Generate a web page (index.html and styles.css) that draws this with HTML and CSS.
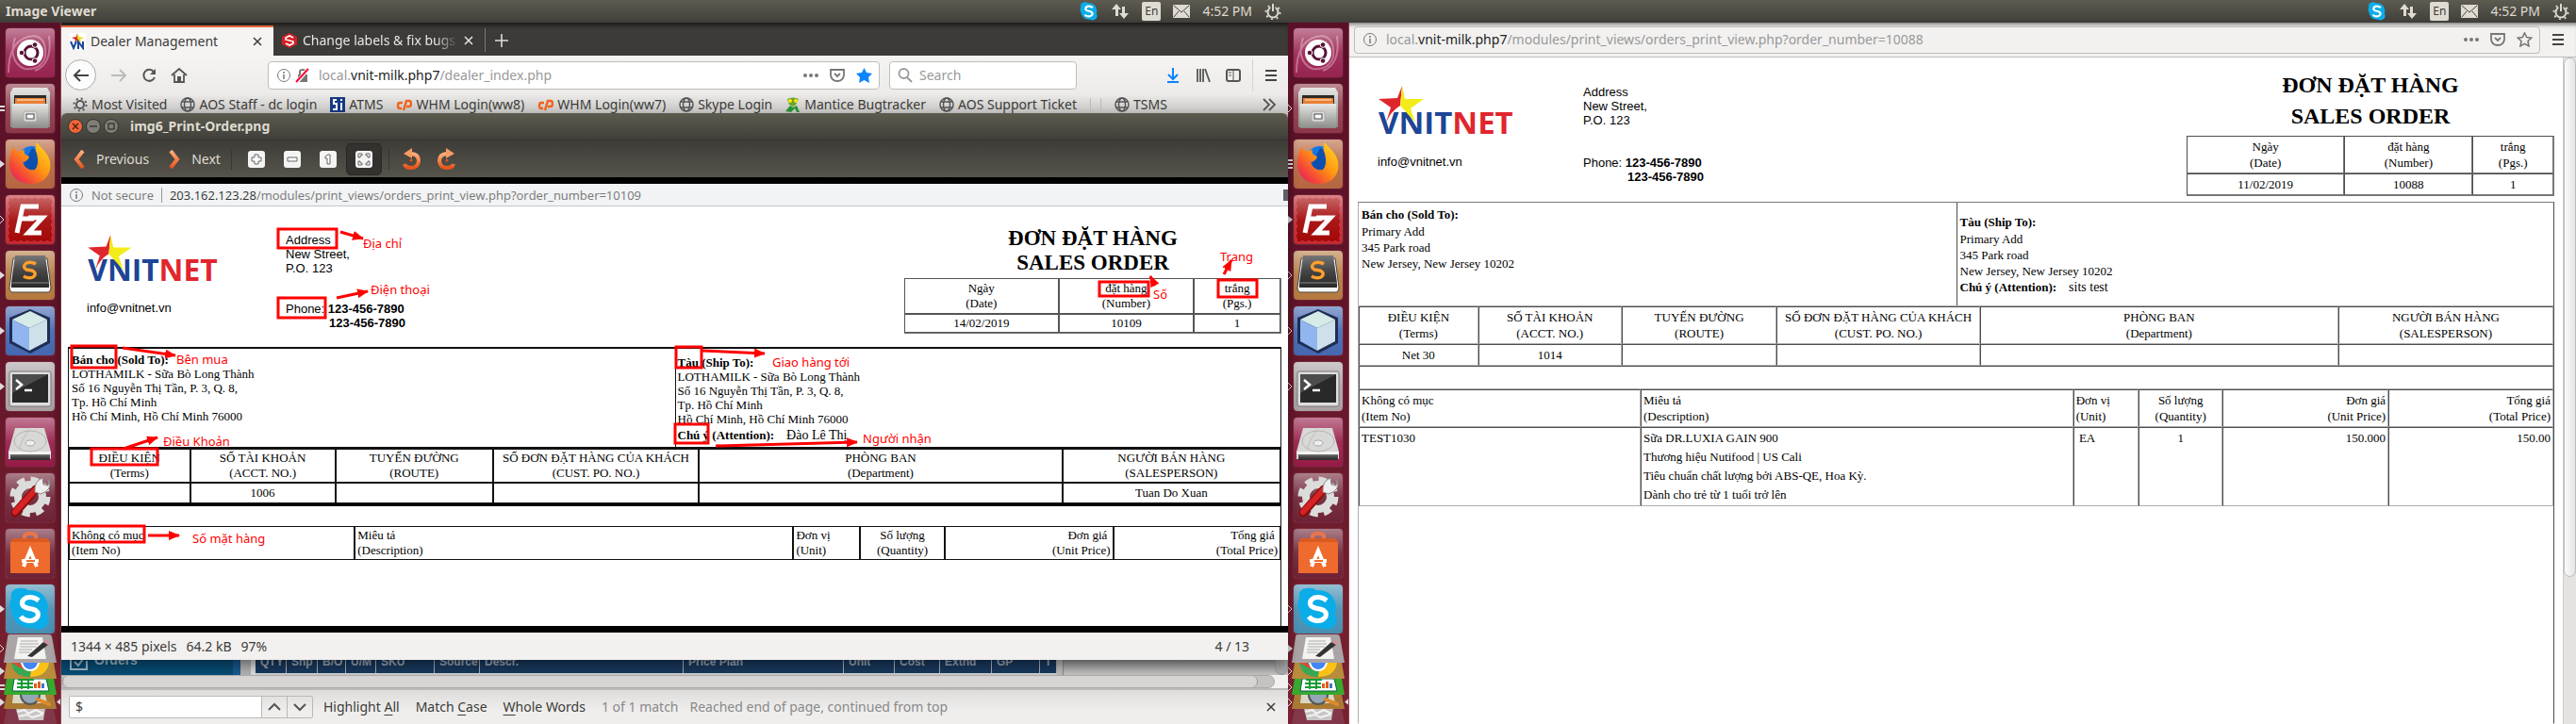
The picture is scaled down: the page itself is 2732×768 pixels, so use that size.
FILE: index.html
```html
<!DOCTYPE html>
<html lang="vi">
<head>
<meta charset="utf-8">
<title>Image Viewer</title>
<link rel="stylesheet" href="styles.css">
</head>
<body>
<svg class="defs" aria-hidden="true">
  <defs>
    <linearGradient id="gloss" x1="0" y1="0" x2="0" y2="1"><stop offset="0" stop-color="#fff" stop-opacity=".42"/><stop offset=".5" stop-color="#fff" stop-opacity=".08"/><stop offset="1" stop-color="#fff" stop-opacity="0"/></linearGradient>
    <linearGradient id="metal" x1="0" y1="0" x2="0" y2="1"><stop offset="0" stop-color="#e6e6e4"/><stop offset="1" stop-color="#8b8b88"/></linearGradient>
    <linearGradient id="dark" x1="0" y1="0" x2="0" y2="1"><stop offset="0" stop-color="#777"/><stop offset=".5" stop-color="#444"/><stop offset="1" stop-color="#292929"/></linearGradient>
    <linearGradient id="fox" x1="1" y1="0" x2="0" y2="1"><stop offset="0" stop-color="#ffe226"/><stop offset=".45" stop-color="#ff9312"/><stop offset=".75" stop-color="#f4433a"/><stop offset="1" stop-color="#e0117a"/></linearGradient>
    <linearGradient id="orange" x1="0" y1="0" x2="0" y2="1"><stop offset="0" stop-color="#ffb07c"/><stop offset="1" stop-color="#ea5419"/></linearGradient>
    <marker id="head" markerUnits="userSpaceOnUse" markerWidth="13" markerHeight="10" refX="11" refY="5" orient="auto"><path d="M0 0 12 5 0 10z" fill="#f00"/></marker>
  </defs>
  <symbol id="t-ubuntu" viewBox="0 0 52 52"><rect width="52" height="52" rx="4" fill="#972350"/><path d="M3 47Q3 10 30 8q14 2 12 22-5 15-22 13Q2 35 10 10M46 8q4 30-15 37" fill="none" stroke="#d58caa" stroke-width="2" opacity=".65"/><rect width="52" height="52" rx="4" fill="url(#gloss)"/><circle cx="26" cy="26" r="14" fill="#fff"/><circle cx="27" cy="26" r="7" fill="none" stroke="#5a1337" stroke-width="3"/><g fill="#5a1337" stroke="#fff" stroke-width="1"><circle cx="17" cy="26" r="2.8"/><circle cx="31" cy="17.500" r="2.800"/><circle cx="31" cy="34.500" r="2.800"/></g></symbol>
  <symbol id="t-files" viewBox="0 0 52 52"><rect width="52" height="52" rx="4" fill="#8d3849"/><rect width="52" height="52" rx="4" fill="url(#gloss)"/><path d="M8 4h36l3 5v37H5V9z" fill="url(#metal)"/><path d="M9 12h34v9H9z" fill="#2d2a26"/><path d="M10 15h32v6H10z" fill="#e88035"/><path d="M12 17h28" stroke="#fff0d5"/><path d="M7 21h38v26H7z" fill="url(#metal)"/><rect x="19" y="29" width="14" height="11" rx="2" fill="#ddd" stroke="#aaa"/><rect x="22" y="32" width="8" height="5" fill="#fff" stroke="#444"/></symbol>
  <symbol id="t-firefox" viewBox="0 0 52 52"><rect width="52" height="52" rx="4" fill="#b5663f"/><rect width="52" height="52" rx="4" fill="url(#gloss)"/><circle cx="28" cy="22" r="15" fill="#1676e4"/><path d="M28 9q14 5 10 22l-11 5-9-8z" fill="#0c4fae"/><path d="M33 3q3 4 8 9 8 9 6 20-4 15-21 15Q7 46 4 28 4 14 9 8q1 3 4 5l7-2q-2 5 5 7-1 5-7 6 4 10 13 8 5-5 2-17-3-6 0-12z" fill="url(#fox)"/></symbol>
  <symbol id="t-fz" viewBox="0 0 52 52"><rect width="52" height="52" rx="4" fill="#c32a31"/><rect x="3" y="3" width="46" height="46" rx="2" fill="#a30505" stroke="#c32a31" stroke-width="2" stroke-dasharray="3 4"/><rect width="52" height="52" rx="4" fill="url(#gloss)"/><path d="M12 40 18 12h17M15 25h15M24 24h15L24 40h14" fill="none" stroke="#fff" stroke-width="5"/></symbol>
  <symbol id="t-sublime" viewBox="0 0 52 52"><rect width="52" height="52" rx="4" fill="#b5793f"/><rect width="52" height="52" rx="4" fill="url(#gloss)"/><path d="M8 8h36l4 31q0 5-4 5H8q-4 0-4-5z" fill="#f6f6f4" stroke="#444"/><path d="M10 5h32l4 29v5H6v-5z" fill="url(#dark)"/><path d="M6 34h40" stroke="#888"/><path d="M32 14q-5-3-10-1-5 4 0 7l6 1q6 3 1 7-5 2-10-1" fill="none" stroke="#ff9e2c" stroke-width="3.500"/></symbol>
  <symbol id="t-cube" viewBox="0 0 52 52"><rect width="52" height="52" rx="4" fill="#4467b0"/><rect width="52" height="52" rx="4" fill="url(#gloss)"/><path d="M26 3 47 12v27L26 50 4 39V12z" fill="#1f2d55"/><path d="M26 5 44 14 25 23 7 14z" fill="#d6ebe8"/><path d="M7 14l18 9v24L7 37z" fill="#91b5ee"/><path d="M44 14 25 23v24l19-10z" fill="#cfe0ea"/></symbol>
  <symbol id="t-term" viewBox="0 0 52 52"><rect width="52" height="52" rx="4" fill="#aaa1a5"/><rect width="52" height="52" rx="4" fill="url(#gloss)"/><rect x="4" y="10" width="44" height="37" rx="2" fill="#ddd" stroke="#777"/><rect x="7" y="13" width="38" height="30" fill="#292929"/><path d="M7 13h38L7 33z" fill="#4c4c4c"/><path d="M11 19l6 5-6 5M20 30h8" fill="none" stroke="#fff" stroke-width="2.500"/></symbol>
  <symbol id="t-disk" viewBox="0 0 52 52"><rect width="52" height="52" rx="4" fill="#961b47"/><rect width="52" height="52" rx="4" fill="url(#gloss)"/><path d="M10 11h31l7 25v8H3v-8z" fill="#d8d8d6"/><path d="M3 36h45v3H3z" fill="#f4f4f2"/><path d="M5 39h42v6H5z" fill="url(#dark)"/><ellipse cx="26" cy="25" rx="17" ry="11" fill="none" stroke="#b5b5b2"/><ellipse cx="26" cy="27" rx="5" ry="3" fill="#eee" stroke="#aaa"/><path d="M25 13q-8 10-11 20" fill="none" stroke="#bbb"/></symbol>
  <symbol id="t-settings" viewBox="0 0 52 52"><rect width="52" height="52" rx="4" fill="#6e2236"/><rect width="52" height="52" rx="4" fill="url(#gloss)"/><circle cx="26" cy="25" r="13" fill="none" stroke="#dcdcda" stroke-width="8"/><circle cx="26" cy="25" r="18" fill="none" stroke="#dcdcda" stroke-width="7" stroke-dasharray="8 6.140"/><path d="M10 42 32 17" stroke="#8a0e0e" stroke-width="9" stroke-linecap="round"/><path d="M10 41 31 18" stroke="#d62323" stroke-width="6" stroke-linecap="round"/><path d="M31 20q-1-12 8-15l1 7 5 1 1-6q4 11-9 15z" fill="#eee" stroke="#888"/></symbol>
  <symbol id="t-store" viewBox="0 0 52 52"><rect width="52" height="52" rx="4" fill="#6e2236"/><rect width="52" height="52" rx="4" fill="url(#gloss)"/><path d="M20 16V8q0-3 6-3t6 3v8" fill="none" stroke="#e8764a" stroke-width="4"/><path d="M5 14h42v33H5z" fill="#ef6a2d"/><path d="M5 14h42l-3-4H8z" fill="#d95b22"/><path d="M19 40l7-17 7 17M17 34h18" fill="none" stroke="#fff" stroke-width="4"/><path d="M22 34h9" stroke="#ef6a2d" stroke-width="2"/></symbol>
  <symbol id="skype" viewBox="0 0 46 46"><path d="M3 12Q1 3 10 1q7-1 11 2 17-1 21 16 0 6-1 9 4 8-1 13-6 6-15 2Q6 44 3 25 0 18 3 12z" fill="#0bade9"/><path d="M32 14q-6-5-13-3-6 3-4 8 2 3 10 4 8 2 6 8-4 6-12 4-4-1-6-4" fill="none" stroke="#fff" stroke-width="5"/></symbol>
  <symbol id="t-skype" viewBox="0 0 52 52"><rect width="52" height="52" rx="4" fill="#478fb3"/><rect width="52" height="52" rx="4" fill="url(#gloss)"/><use href="#skype" x="3" y="3" width="46" height="46"/></symbol>
  <symbol id="f-editor" viewBox="0 0 56 30"><path d="M6 0h42q2 0 3 2l5 28H0L4 3q0-3 2-3z" fill="#aaa4a6"/><path d="M15 3h26l4 23H11z" fill="#f3f3f0"/><path d="M18 7h18M17 10h20M17 13h18M16 16h14M16 19h12" stroke="#aaa"/><path d="M25 23 42 8l5 3-17 13z" fill="#333"/><path d="M42 8l3-2 5 3-3 2z" fill="#d58c9b"/></symbol>
  <symbol id="f-chrome" viewBox="0 0 56 17"><path d="M3 0h50l3 17H0z" fill="#b98c3c"/><path d="M8 0h40q-2 15-20 15T8 0z" fill="#38a853"/><path d="M28 15Q46 15 48 0H30z" fill="#fbc116"/><path d="M8 0h8l7 8z" fill="#e94335"/><path d="M18 0h20q-2 9-10 9T18 0z" fill="#fff"/><path d="M20 0h16q-2 7-8 7t-8-7z" fill="#4285f4"/></symbol>
  <symbol id="f-calc" viewBox="0 0 56 17"><path d="M3 0h50l3 17H0z" fill="#38a92f"/><path d="M11 0h34l3 13H9z" fill="#fff" stroke="#064"/><path d="M15 1h17M14 5h17M14 9h17M19 0v11M26 0v11" stroke="#179b35" stroke-width="2"/><path d="M32 10V5h3v5zM36 10V3h3v7z" fill="#e55c1c"/><path d="M40 10V5h3v5z" fill="#3778c9"/></symbol>
  <symbol id="f-viewer" viewBox="0 0 56 15"><path d="M3 0h50l3 15H0z" fill="#aa7a35"/><path d="M10 0h34l2 9H9z" fill="#d9d8c4"/><circle cx="28" cy="0" r="10" fill="#94a6b5" stroke="#555" stroke-width="2"/><path d="M36 5l12 5" stroke="#dd8b2b" stroke-width="4" stroke-linecap="round"/></symbol>
  <symbol id="f-trash" viewBox="0 0 56 16"><path d="M3 0h50l3 16H0z" fill="#82374a"/><path d="M13 0h31l-2 12H16z" fill="#c9c5c4"/><path d="M14 3l8-2 4 4 8-4 8 4M16 8l9-2 5 3 11-3" stroke="#f3f3f3" fill="none" stroke-width="2"/></symbol>
  <symbol id="p-fill" viewBox="0 0 6 10"><path d="M0 1l5 4-5 4z" fill="#ddd"/></symbol>
  <symbol id="p-line" viewBox="0 0 6 10"><path d="M0 1l4 4-4 4" fill="none" stroke="#ddd"/></symbol>
  <symbol id="p-two" viewBox="0 0 6 10"><path d="M0 3h5M0 7h5" stroke="#ddd" stroke-width="2"/></symbol>
  <symbol id="p-three" viewBox="0 0 6 10"><path d="M0 1h5M0 5h5M0 9h5" stroke="#ddd" stroke-width="2"/></symbol>
  <symbol id="updown" viewBox="0 0 20 18"><path d="M6 1 1 7h4v7h3V7h3zM14 17l5-6h-4V4h-3v7H9z" fill="#dfdbd2"/></symbol>
  <symbol id="mail" viewBox="0 0 18 14"><rect width="18" height="14" rx="1" fill="#dfdbd2"/><path d="M1 1l8 7 8-7M1 13l5-6M17 13l-5-6" fill="none" stroke="#45443f"/></symbol>
  <symbol id="power" viewBox="0 0 18 18"><circle cx="9" cy="10" r="5.500" fill="none" stroke="#dfdbd2" stroke-width="2"/><circle cx="9" cy="10" r="7.500" fill="none" stroke="#dfdbd2" stroke-width="2" stroke-dasharray="2 3.900"/><path d="M6.500 1h5v9h-5z" fill="#4b4a44"/><path d="M9 1v8" stroke="#dfdbd2" stroke-width="2"/></symbol>
  <symbol id="globe" viewBox="0 0 16 16"><g fill="none" stroke="#555" stroke-width="1.500"><circle cx="8" cy="8" r="7"/><ellipse cx="8" cy="8" rx="3.500" ry="7"/><path d="M2 5h12M2 11h12"/></g></symbol>
  <symbol id="info" viewBox="0 0 16 16"><circle cx="8" cy="8" r="6.500" fill="none" stroke="#777"/><path d="M8 7v5M8 4v2" stroke="#777" stroke-width="1.500"/></symbol>
  <symbol id="dots" viewBox="0 0 16 16"><g fill="#777"><circle cx="2" cy="8" r="2"/><circle cx="8" cy="8" r="2"/><circle cx="14" cy="8" r="2"/></g></symbol>
  <symbol id="pocket" viewBox="0 0 16 16"><path d="M1 2h14v6q-1 6-7 6T1 8zM5 6l3 3 3-3" fill="none" stroke="#777" stroke-width="1.800"/></symbol>
  <symbol id="burger" viewBox="0 0 16 16"><path d="M2 3h12M2 8h12M2 13h12" stroke="#444" stroke-width="2"/></symbol>
  <symbol id="close" viewBox="0 0 12 12"><path d="M2 2l8 8M10 2l-8 8" stroke="currentColor" stroke-width="1.500"/></symbol>
  <symbol id="cpanel" viewBox="0 0 17 16"><path d="M7 6H4q-2 0-2 3t2 3h2M8 14l3-10h3q2 0 2 3t-2 3h-3" fill="none" stroke="#f0641e" stroke-width="2.500"/></symbol>
  <symbol id="star" viewBox="0 0 50 40"><path d="M26 0 21 13 1 14l13 9-5 16q5-12 15-18z" fill="#e0262d"/><path d="M26 0l3 14 20 0-14 10 5 15-16-18z" fill="#f3ec1a"/></symbol>
</svg>

<main class="desktop">
  <section class="monitor">
    <header class="panel">
      <span class="panel-title">Image Viewer</span>
      <div class="indicators"><svg width="20" height="20"><use href="#skype"/></svg><svg width="20" height="18"><use href="#updown"/></svg><span class="lang">En</span><svg width="18" height="14"><use href="#mail"/></svg><time>4:52 PM</time><svg width="18" height="18"><use href="#power"/></svg></div>
    </header>
    <div class="workspace">
      <nav class="launcher" aria-label="Launcher">
        <ul>
          <li><span></span><button aria-label="Dash"><svg><use href="#t-ubuntu"/></svg></button></li>
          <li><svg class="pip"><use href="#p-two"/></svg><button aria-label="Files"><svg><use href="#t-files"/></svg></button></li>
          <li><svg class="pip"><use href="#p-fill"/></svg><button aria-label="Firefox"><svg><use href="#t-firefox"/></svg></button></li>
          <li><svg class="pip"><use href="#p-line"/></svg><button aria-label="FileZilla"><svg><use href="#t-fz"/></svg></button></li>
          <li><svg class="pip"><use href="#p-fill"/></svg><button aria-label="Sublime Text"><svg><use href="#t-sublime"/></svg></button></li>
          <li><svg class="pip"><use href="#p-fill"/></svg><button aria-label="NetBeans"><svg><use href="#t-cube"/></svg></button></li>
          <li><svg class="pip"><use href="#p-fill"/></svg><button aria-label="Terminal"><svg><use href="#t-term"/></svg></button></li>
          <li><span></span><button aria-label="Disk"><svg><use href="#t-disk"/></svg></button></li>
          <li><span></span><button aria-label="Settings"><svg><use href="#t-settings"/></svg></button></li>
          <li><span></span><button aria-label="Software"><svg><use href="#t-store"/></svg></button></li>
          <li><svg class="pip"><use href="#p-fill"/></svg><button aria-label="Skype"><svg><use href="#t-skype"/></svg></button></li>
        </ul>
        <ul class="folded">
          <li><svg class="pip"><use href="#p-line"/></svg><button aria-label="Text Editor"><svg class="h30"><use href="#f-editor"/></svg></button></li>
          <li><svg class="pip"><use href="#p-fill"/></svg><button aria-label="Chrome"><svg class="h17"><use href="#f-chrome"/></svg></button></li>
          <li><svg class="pip"><use href="#p-two"/></svg><button aria-label="Calc"><svg class="h17"><use href="#f-calc"/></svg></button></li>
          <li><svg class="pip"><use href="#p-fill"/></svg><button aria-label="Image Viewer"><svg class="h15"><use href="#f-viewer"/></svg></button><span class="focus"></span></li>
          <li><span></span><button aria-label="Trash"><svg class="h16"><use href="#f-trash"/></svg></button></li>
        </ul>
      </nav>

      <div class="browser">
        <div class="tabs">
          <div class="tab active">
            <svg width="17" height="18" viewBox="0 0 17 18"><rect width="17" height="18" fill="#fff"/><path d="M8 0 7 4 2 5l4 2-1 3 3-2z" fill="#e0262d"/><path d="M8 0l2 4 5 1-4 2 1 3-4-2z" fill="#e8dc20"/><path d="M1 9l3 7 3-7M9 17V9l5 7V9" fill="none" stroke="#1d4596" stroke-width="2"/></svg>
            <span class="tab-name">Dealer Management</span><button aria-label="Close tab"><svg width="12" height="12"><use href="#close"/></svg></button>
          </div>
          <div class="tab">
            <svg width="17" height="16" viewBox="0 0 17 16"><path d="M8 0l8 4v8l-8 4-8-4V4z" fill="#d51f27"/><path d="M12 5 8 3 4 5v2l8 2v2l-4 2-4-2" fill="none" stroke="#fff" stroke-width="1.600"/></svg>
            <span class="tab-name fade">Change labels &amp; fix bugs_</span><button aria-label="Close tab"><svg width="12" height="12"><use href="#close"/></svg></button>
          </div>
          <button class="new-tab" aria-label="New tab"><svg width="14" height="14" viewBox="0 0 14 14"><path d="M7 0v14M0 7h14" stroke="#ddd" stroke-width="1.600"/></svg></button>
        </div>
        <div class="navbar">
          <div class="nav-buttons">
            <button class="back" aria-label="Back"><svg width="18" height="16" viewBox="0 0 18 16"><path d="M17 8H2M8 2 2 8l6 6" fill="none" stroke="#444" stroke-width="2"/></svg></button>
            <button aria-label="Forward"><svg width="18" height="16" viewBox="0 0 18 16"><path d="M1 8h15M10 2l6 6-6 6" fill="none" stroke="#bbb" stroke-width="2"/></svg></button>
            <button aria-label="Reload"><svg width="16" height="16" viewBox="0 0 16 16"><path d="M13 4a6 6 0 1 0 1 6" fill="none" stroke="#555" stroke-width="2"/><path d="M15 1v6H9z" fill="#555"/></svg></button>
            <button aria-label="Home"><svg width="18" height="16" viewBox="0 0 18 16"><path d="M1 8l8-7 8 7M4 7v8h10V7" fill="none" stroke="#555" stroke-width="1.800"/><path d="M7 9h4v6H7z" fill="#555"/></svg></button>
          </div>
          <div class="urlbox">
            <svg width="16" height="16"><use href="#info"/></svg>
            <svg width="16" height="16" viewBox="0 0 16 16"><path d="M5 7V4q0-2 3-2t3 2v3" fill="none" stroke="#777" stroke-width="2"/><path d="M3 7h10v8H3z" fill="#777"/><path d="M1 16 14 1" stroke="#fff" stroke-width="4"/><path d="M1 15 14 1" stroke="#ff0039" stroke-width="2"/></svg>
            <span class="url">local.<b>vnit-milk.php7</b>/dealer_index.php</span>
            <svg width="16" height="16"><use href="#dots"/></svg><svg width="16" height="16"><use href="#pocket"/></svg>
            <svg width="17" height="16" viewBox="0 0 17 16"><path d="M8.500 0l2.500 5 6 1-4 4 1 6-5.500-3L3 16l1-6-4-4 6-1z" fill="#0a84ff"/></svg>
          </div>
          <label class="search"><svg width="17" height="16" viewBox="0 0 17 16"><circle cx="6.500" cy="6" r="5" fill="none" stroke="#999" stroke-width="1.800"/><path d="M10 10l5 5" stroke="#999" stroke-width="2"/></svg><input type="text" placeholder="Search" aria-label="Search"></label>
          <div class="nav-tools">
            <button aria-label="Downloads"><svg width="16" height="16" viewBox="0 0 16 16"><path d="M8 0v11M3 7l5 5 5-5M2 15h12" fill="none" stroke="#0a84ff" stroke-width="2"/></svg></button>
            <button aria-label="Library"><svg width="16" height="16" viewBox="0 0 16 16"><path d="M2 1v14M5 1v14M8 1v14M10 1l5 14" stroke="#555" stroke-width="1.800"/></svg></button>
            <button aria-label="Sidebar"><svg width="16" height="16" viewBox="0 0 16 16"><rect x="1" y="2" width="14" height="12" rx="2" fill="none" stroke="#555" stroke-width="2"/><path d="M8 2v12M3 5h3M3 8h3" stroke="#555"/></svg></button>
          </div>
          <button class="menu" aria-label="Menu"><svg width="16" height="16"><use href="#burger"/></svg></button>
        </div>
        <div class="bookmarks">
          <a href="#"><svg width="16" height="16" viewBox="0 0 16 16"><circle cx="8" cy="8" r="4" fill="none" stroke="#555" stroke-width="2"/><circle cx="8" cy="8" r="6.500" fill="none" stroke="#555" stroke-width="2" stroke-dasharray="2 3.100"/></svg>Most Visited</a>
          <a href="#"><svg width="16" height="16"><use href="#globe"/></svg>AOS Staff - dc login</a>
          <a href="#"><svg width="16" height="16" viewBox="0 0 16 16"><rect width="16" height="16" fill="#163a83"/><path d="M7 3H4v4h3v6H3M12 6v8" fill="none" stroke="#fff" stroke-width="2"/><path d="M11 2h2v2h-2z" fill="#fff"/></svg>ATMS</a>
          <a href="#"><svg width="17" height="16"><use href="#cpanel"/></svg>WHM Login(ww8)</a>
          <a href="#"><svg width="17" height="16"><use href="#cpanel"/></svg>WHM Login(ww7)</a>
          <a href="#"><svg width="16" height="16"><use href="#globe"/></svg>Skype Login</a>
          <a href="#"><svg width="16" height="16" viewBox="0 0 16 16"><path d="M2 2q6-3 12 0l-3 6-3 2-4-2z" fill="#6aa61f"/><circle cx="5" cy="4" r="2" fill="#ffe21a"/><circle cx="11" cy="4" r="2" fill="#ffe21a"/><path d="M0 15l5-6 3 2 4-2 3 7h-3l-2-4-4 4z" fill="#279333"/></svg>Mantice Bugtracker</a>
          <a href="#"><svg width="16" height="16"><use href="#globe"/></svg>AOS Support Ticket</a>
          <i></i><i></i>
          <a href="#"><svg width="16" height="16"><use href="#globe"/></svg>TSMS</a>
          <button class="more" aria-label="More bookmarks"><svg width="15" height="14" viewBox="0 0 15 14"><path d="M1 1l6 6-6 6M7 1l6 6-6 6" fill="none" stroke="#555" stroke-width="1.800"/></svg></button>
        </div>
        <div class="page-strip">
          <div class="side"><svg width="20" height="22" viewBox="0 0 20 22"><path d="M5 6H1v14h17v-9M5 12l4 4 8-11" fill="none" stroke="#9bb9cb" stroke-width="2"/></svg>Orders</div>
          <div class="side-scroll"></div>
          <table class="grid-head">
            <colgroup><col class="g33"><col class="g33"><col class="g30"><col class="g32"><col class="g62"><col class="g48"><col class="g216"><col class="g170"><col class="g54"><col class="g48"><col class="g55"><col class="g51"><col></colgroup>
            <tr><th>QTY</th><th>Shp</th><th>B/O</th><th>U/M</th><th>SKU</th><th>Source</th><th>Descr.</th><th>Price Plan</th><th>Unit</th><th>Cost</th><th>Extnd</th><th>GP</th><th>T</th></tr>
          </table>
          <div class="page-rest"><span></span></div>
        </div>
        <div class="hscroll"><span></span></div>
        <div class="findbar">
          <div class="find-group"><input type="text" value="$" aria-label="Find in page"><button aria-label="Previous match"><svg width="14" height="10" viewBox="0 0 14 10"><path d="M1 8l6-6 6 6" fill="none" stroke="#555" stroke-width="2"/></svg></button><button aria-label="Next match"><svg width="14" height="10" viewBox="0 0 14 10"><path d="M1 2l6 6 6-6" fill="none" stroke="#555" stroke-width="2"/></svg></button></div>
          <button>Highlight <u>A</u>ll</button><button>Match <u>C</u>ase</button><button><u>W</u>hole Words</button>
          <span class="found">1 of 1 match</span><span class="wrapped">Reached end of page, continued from top</span>
          <button class="find-close" aria-label="Close find bar"><svg width="12" height="12"><use href="#close"/></svg></button>
        </div>
      </div>

      <section class="viewer">
        <header class="titlebar">
          <button class="wb red" aria-label="Close"><svg width="16" height="16" viewBox="0 0 16 16"><path d="M5 5l6 6M11 5l-6 6" stroke="#5b2213" stroke-width="1.500"/></svg></button><button class="wb" aria-label="Minimize"><svg width="16" height="16" viewBox="0 0 16 16"><path d="M4 8h8" stroke="#3c3b37" stroke-width="1.500"/></svg></button><button class="wb" aria-label="Maximize"><svg width="16" height="16" viewBox="0 0 16 16"><path d="M5 5h6v6H5z" fill="none" stroke="#3c3b37" stroke-width="1.500"/></svg></button>
          <h1>img6_Print-Order.png</h1>
        </header>
        <div class="toolbar">
          <button class="nav"><svg width="12" height="20" viewBox="0 0 12 20"><path d="M10 1 3 10l7 9" fill="none" stroke="url(#orange)" stroke-width="4"/></svg>Previous</button>
          <button class="nav"><svg width="12" height="20" viewBox="0 0 12 20"><path d="M2 1l7 9-7 9" fill="none" stroke="url(#orange)" stroke-width="4"/></svg>Next</button>
          <i></i>
          <button class="tool" aria-label="Zoom in"><svg width="18" height="18" viewBox="0 0 18 18"><rect width="18" height="18" rx="3" fill="#f4f4f2"/><path d="M7 4h4v3h3v4h-3v3H7v-3H4V7h3z" fill="#fff" stroke="#666"/></svg></button>
          <button class="tool" aria-label="Zoom out"><svg width="18" height="18" viewBox="0 0 18 18"><rect width="18" height="18" rx="3" fill="#f4f4f2"/><path d="M4 7h10v4H4z" fill="#fff" stroke="#666"/></svg></button>
          <button class="tool" aria-label="Normal size"><svg width="18" height="18" viewBox="0 0 18 18"><rect width="18" height="18" rx="3" fill="#f4f4f2"/><path d="M9 4h2v10H8V8H6V6z" fill="#fff" stroke="#666"/></svg></button>
          <button class="tool pressed" aria-label="Best fit"><svg width="18" height="18" viewBox="0 0 18 18"><rect width="18" height="18" rx="3" fill="#f4f4f2"/><path d="M3 7V3h4v2H5v2zM11 3h4v4h-2V5h-2zM15 11v4h-4v-2h2v-2zM7 15H3v-4h2v2h2z" fill="#fff" stroke="#666"/></svg></button>
          <i></i>
          <button class="tool turn" aria-label="Rotate left"><svg width="20" height="23" viewBox="0 0 20 23"><path d="M8 6q9 0 9 8-1 7-8 7-6 0-7-4" fill="none" stroke="url(#orange)" stroke-width="4"/><path d="M1 6l9-6v11z" fill="#f79b66"/><circle cx="9" cy="13" r="1.500" fill="#ea5419"/></svg></button>
          <button class="tool turn" aria-label="Rotate right"><svg width="20" height="23" viewBox="0 0 20 23"><path d="M12 6q-9 0-9 8 1 7 8 7 6 0 7-4" fill="none" stroke="url(#orange)" stroke-width="4"/><path d="M19 6l-9-6v11z" fill="#f79b66"/><circle cx="11" cy="13" r="1.500" fill="#ea5419"/></svg></button>
        </div>
        <div class="canvas">
          <div class="shot">
            <div class="insecure"><svg width="16" height="16"><use href="#info"/></svg><span>Not secure</span><i></i><span class="addr"><b>203.162.123.28</b>/modules/print_views/orders_print_view.php?order_number=10109</span><em></em></div>
            <article class="order small">
              <div class="order-head">
                <div class="brand"><svg class="logo" viewBox="0 0 150 54"><text x="1" y="51" class="logo-text"><tspan fill="#1d4596">VNIT</tspan><tspan fill="#e0262d">NET</tspan></text><use href="#star" width="50" height="40"/></svg><p>info@vnitnet.vn</p></div>
                <div class="contact"><p>Address<br>New Street,<br>P.O. 123</p><p>Phone: <b>123-456-7890</b><br><b class="second">123-456-7890</b></p></div>
                <div class="order-id"><h2>ĐƠN ĐẶT HÀNG<br>SALES ORDER</h2>
                  <table class="date-table"><colgroup><col class="d1"><col class="d2"><col></colgroup><tr><th>Ngày<br>(Date)</th><th>đặt hàng<br>(Number)</th><th>trắng<br>(Pgs.)</th></tr><tr><td>14/02/2019</td><td>10109</td><td>1</td></tr></table></div>
              </div>
              <div class="frame">
                <div class="parties">
                  <div><b>Bán cho (Sold To):</b><p>LOTHAMILK - Sữa Bò Long Thành<br>Số 16 Nguyễn Thị Tần, P. 3, Q. 8,<br>Tp. Hồ Chí Minh<br>Hồ Chí Minh, Hồ Chí Minh 76000</p></div>
                  <div><b>Tàu (Ship To):</b><p>LOTHAMILK - Sữa Bò Long Thành<br>Số 16 Nguyễn Thị Tần, P. 3, Q. 8,<br>Tp. Hồ Chí Minh<br>Hồ Chí Minh, Hồ Chí Minh 76000</p><p class="attn"><b>Chú ý (Attention):</b><span>Đào Lê Thị</span></p></div>
                </div>
                <table class="terms"><colgroup><col class="t1"><col class="t2"><col class="t3"><col class="t4"><col class="t5"><col></colgroup>
                  <tr><th>ĐIỀU KIỆN<br>(Terms)</th><th>SỐ TÀI KHOẢN<br>(ACCT. NO.)</th><th>TUYẾN ĐƯỜNG<br>(ROUTE)</th><th>SỐ ĐƠN ĐẶT HÀNG CỦA KHÁCH<br>(CUST. PO. NO.)</th><th>PHÒNG BAN<br>(Department)</th><th>NGƯỜI BÁN HÀNG<br>(SALESPERSON)</th></tr>
                  <tr><td>&nbsp;</td><td>1006</td><td></td><td></td><td></td><td>Tuan Do Xuan</td></tr></table>
                <div class="spacer"></div>
                <table class="items"><colgroup><col class="i1"><col class="i2"><col class="i3"><col class="i4"><col class="i5"><col></colgroup>
                  <tr><th>Không có mục<br>(Item No)</th><th>Miêu tả<br>(Description)</th><th>Đơn vị<br>(Unit)</th><th>Số lượng<br>(Quantity)</th><th>Đơn giá&nbsp;<br>(Unit Price)</th><th>Tổng giá&nbsp;<br>(Total Price)</th></tr></table>
              </div>
            </article>
            <svg class="notes" viewBox="65 195 1301 469">
              <g fill="none" stroke="#f00" stroke-width="3"><path d="M295 243h62v20h-62zM295 316h50v21h-50zM76 367h47v23H76zM97 476h70v17H97zM73 558h80v17H73zM1166 299h52v15h-52zM1292 297h41v18h-41zM717 368h27v22h-27zM716 450h35v20h-35z"/>
              <g marker-end="url(#head)"><path d="M361 246 385 253"/><path d="M357 316 390 309"/><path d="M130 369 186 377"/><path d="M131 476 167 464"/><path d="M157 568 190 568"/><path d="M745 372 811 375"/><path d="M759 473 909 469"/><path d="M1225 303 1220 293"/><path d="M1298 291 1306 276"/></g></g>
              <g fill="#f00"><text x="385" y="263">Địa chỉ</text><text x="393" y="312">Điện thoại</text><text x="187" y="386">Bên mua</text><text x="173" y="473">Điều Khoản</text><text x="204" y="576">Số mặt hàng</text><text x="819" y="389">Giao hàng tới</text><text x="915" y="470">Người nhận</text><text x="1223" y="317">Số</text><text x="1294" y="277">Trang</text></g>
            </svg>
          </div>
        </div>
        <footer class="status"><span>1344 × 485 pixels</span><span>64.2 kB</span><span>97%</span><span class="count">4 / 13</span></footer>
      </section>
    </div>
  </section>

  <section class="monitor">
    <header class="panel">
      <span></span>
      <div class="indicators"><svg width="20" height="20"><use href="#skype"/></svg><svg width="20" height="18"><use href="#updown"/></svg><span class="lang">En</span><svg width="18" height="14"><use href="#mail"/></svg><time>4:52 PM</time><svg width="18" height="18"><use href="#power"/></svg></div>
    </header>
    <div class="workspace">
      <nav class="launcher" aria-label="Launcher, second screen">
        <ul>
          <li><span></span><button aria-label="Dash"><svg><use href="#t-ubuntu"/></svg></button></li>
          <li><svg class="pip"><use href="#p-line"/></svg><button aria-label="Files"><svg><use href="#t-files"/></svg></button></li>
          <li><svg class="pip"><use href="#p-three"/></svg><button aria-label="Firefox"><svg><use href="#t-firefox"/></svg></button></li>
          <li><svg class="pip"><use href="#p-fill"/></svg><button aria-label="FileZilla"><svg><use href="#t-fz"/></svg></button></li>
          <li><svg class="pip"><use href="#p-line"/></svg><button aria-label="Sublime Text"><svg><use href="#t-sublime"/></svg></button></li>
          <li><svg class="pip"><use href="#p-line"/></svg><button aria-label="NetBeans"><svg><use href="#t-cube"/></svg></button></li>
          <li><svg class="pip"><use href="#p-line"/></svg><button aria-label="Terminal"><svg><use href="#t-term"/></svg></button></li>
          <li><span></span><button aria-label="Disk"><svg><use href="#t-disk"/></svg></button></li>
          <li><span></span><button aria-label="Settings"><svg><use href="#t-settings"/></svg></button></li>
          <li><span></span><button aria-label="Software"><svg><use href="#t-store"/></svg></button></li>
          <li><svg class="pip"><use href="#p-line"/></svg><button aria-label="Skype"><svg><use href="#t-skype"/></svg></button></li>
        </ul>
        <ul class="folded">
          <li><svg class="pip"><use href="#p-fill"/></svg><button aria-label="Text Editor"><svg class="h30"><use href="#f-editor"/></svg></button></li>
          <li><svg class="pip"><use href="#p-line"/></svg><button aria-label="Chrome"><svg class="h17"><use href="#f-chrome"/></svg></button></li>
          <li><svg class="pip"><use href="#p-line"/></svg><button aria-label="Calc"><svg class="h17"><use href="#f-calc"/></svg></button></li>
          <li><svg class="pip"><use href="#p-line"/></svg><button aria-label="Image Viewer"><svg class="h15"><use href="#f-viewer"/></svg></button><span class="focus"></span></li>
          <li><span></span><button aria-label="Trash"><svg class="h16"><use href="#f-trash"/></svg></button></li>
        </ul>
      </nav>
      <div class="popup">
        <div class="popup-bar">
          <div class="urlbox flat"><svg width="16" height="16"><use href="#info"/></svg><span class="url">local.<b>vnit-milk.php7</b>/modules/print_views/orders_print_view.php?order_number=10088</span><svg width="16" height="16"><use href="#dots"/></svg><svg width="16" height="16"><use href="#pocket"/></svg><svg width="17" height="16" viewBox="0 0 17 16"><path d="M8.500 1l2.200 4.500 5 .7-3.700 3.500 1 5.200-4.500-2.600L4 14.900l1-5.200-3.700-3.500 5-.7z" fill="none" stroke="#777" stroke-width="1.600"/></svg></div>
          <button class="menu-plain" aria-label="Menu"><svg width="16" height="16"><use href="#burger"/></svg></button>
        </div>
        <div class="popup-page">
          <article class="order">
            <div class="order-head">
              <div class="brand"><svg class="logo" viewBox="0 0 150 54"><text x="1" y="51" class="logo-text"><tspan fill="#1d4596">VNIT</tspan><tspan fill="#e0262d">NET</tspan></text><use href="#star" width="50" height="40"/></svg><p>info@vnitnet.vn</p></div>
              <div class="contact"><p>Address<br>New Street,<br>P.O. 123</p><p>Phone: <b>123-456-7890</b><br><b class="second">123-456-7890</b></p></div>
              <div class="order-id"><h2>ĐƠN ĐẶT HÀNG<br>SALES ORDER</h2>
                <table class="date-table"><colgroup><col class="d1"><col class="d2"><col></colgroup><tr><th>Ngày<br>(Date)</th><th>đặt hàng<br>(Number)</th><th>trắng<br>(Pgs.)</th></tr><tr><td>11/02/2019</td><td>10088</td><td>1</td></tr></table></div>
            </div>
            <div class="frame">
              <div class="parties">
                <div><b>Bán cho (Sold To):</b><p>Primary Add<br>345 Park road<br>New Jersey, New Jersey 10202</p></div>
                <div><b>Tàu (Ship To):</b><p>Primary Add<br>345 Park road<br>New Jersey, New Jersey 10202</p><p class="attn"><b>Chú ý (Attention):</b><span>sits test</span></p></div>
              </div>
              <table class="terms"><colgroup><col class="t1"><col class="t2"><col class="t3"><col class="t4"><col class="t5"><col></colgroup>
                <tr><th>ĐIỀU KIỆN<br>(Terms)</th><th>SỐ TÀI KHOẢN<br>(ACCT. NO.)</th><th>TUYẾN ĐƯỜNG<br>(ROUTE)</th><th>SỐ ĐƠN ĐẶT HÀNG CỦA KHÁCH<br>(CUST. PO. NO.)</th><th>PHÒNG BAN<br>(Department)</th><th>NGƯỜI BÁN HÀNG<br>(SALESPERSON)</th></tr>
                <tr><td>Net 30</td><td>1014</td><td></td><td></td><td></td><td></td></tr></table>
              <div class="spacer"></div>
              <table class="items"><colgroup><col class="i1"><col class="i2"><col class="i3"><col class="i4"><col class="i5"><col></colgroup>
                <tr><th>Không có mục<br>(Item No)</th><th>Miêu tả<br>(Description)</th><th>Đơn vị<br>(Unit)</th><th>Số lượng<br>(Quantity)</th><th>Đơn giá<br>(Unit Price)</th><th>Tổng giá<br>(Total Price)</th></tr>
                <tr><td>TEST1030</td><td>Sữa DR.LUXIA GAIN 900<br>Thương hiệu Nutifood | US Cali<br>Tiêu chuẩn chất lượng bởi ABS-QE, Hoa Kỳ.<br>Dành cho trẻ từ 1 tuổi trở lên</td><td>&nbsp;EA</td><td>1</td><td>150.000</td><td>150.00</td></tr></table>
            </div>
          </article>
          <div class="vscroll"><span></span></div>
        </div>
      </div>
    </div>
  </section>
</main>
</body>
</html>
```

FILE: styles.css
```css
* { box-sizing: border-box; }
body { margin: 0; height: 100vh; overflow: hidden; font: 14px/20px "Noto Sans", sans-serif; color: #3c3b37; background: #fff; }
svg { display: block; flex: none; }
button { border: 0; padding: 0; margin: 0; background: none; font: inherit; color: inherit; display: flex; align-items: center; flex: none; }
ul { list-style: none; margin: 0; padding: 0; }
p, h1, h2 { margin: 0; }
table { border-collapse: separate; border-spacing: 0; table-layout: fixed; width: 100%; }
.defs { position: absolute; width: 0; height: 0; }

/* Desktop and panels */
.desktop { display: grid; grid-template-columns: 1fr 1fr; height: 100%; }
.monitor { display: flex; flex-direction: column; min-width: 0; height: 100vh; }
.panel { display: flex; justify-content: space-between; align-items: center; height: 24px; flex: none; padding: 0 7px 0 6px; color: #dfdbd2; background: linear-gradient(#5e5c50, #3f3e39); }
.panel-title { font-weight: 700; }
.indicators { display: flex; align-items: center; gap: 13px; }
.lang { display: block; width: 20px; border-radius: 2px; background: #dfdbd2; color: #3c3b37; text-align: center; font-size: 12px; }
.workspace { position: relative; display: flex; flex: 1; min-height: 0; }

/* Launcher */
.launcher { width: 65px; flex: none; padding-top: 6px; background: linear-gradient(#5a1028, #621529 40%, #7a2231); border-right: 1px solid #8b4450; overflow: hidden; }
.launcher li { display: grid; grid-template-columns: 6px 52px 6px; align-items: center; margin-bottom: 7px; }
.launcher button svg { width: 52px; height: 52px; border-radius: 4px; box-shadow: 0 0 1px #d7a6af; }
.pip { width: 6px; height: 10px; }
.launcher .folded { margin-top: -6px; }
.launcher .folded li { grid-template-columns: 4px 56px 5px; margin: 0; }
.launcher .folded button svg { width: 56px; border-radius: 0; box-shadow: none; }
.launcher .folded .h30 { height: 30px; }
.launcher .folded .h17 { height: 17px; }
.launcher .folded .h16 { height: 16px; }
.launcher .folded .h15 { height: 15px; }
.focus { width: 5px; height: 8px; background: #ddd; clip-path: polygon(100% 0, 0 50%, 100% 100%); }

/* Browser */
.browser { flex: 1; min-width: 0; display: flex; flex-direction: column; background: #f2f1f0; }
.tabs { display: flex; height: 35px; flex: none; background: #3c3b37; box-shadow: inset 0 5px 4px -2px #1c1b19; color: #e8e6e3; }
.tab { display: flex; align-items: center; width: 225px; gap: 5px; padding: 0 11px 0 9px; border-right: 1px solid #777; margin: 6px 0 4px; }
.tab.active { margin: 3px 0 0; padding: 0 11px 0 9px; background: #f5f4f3; color: #3c3b37; border-top: 2px solid #e2663a; border-right: 0; }
.tab-name { flex: 1; min-width: 0; overflow: hidden; white-space: nowrap; }
.fade { mask-image: linear-gradient(to right, #000 85%, transparent); }
.new-tab { padding: 3px 10px 0; }
.navbar { display: flex; align-items: center; height: 41px; flex: none; padding: 0 10px 0 4px; background: linear-gradient(#f5f4f3, #ecebea); }
.nav-buttons { display: flex; align-items: center; gap: 15px; width: 215px; }
.back { width: 33px; height: 33px; border: 1px solid #aaa; border-radius: 50%; background: #fcfcfc; justify-content: center; }
.urlbox { flex: 1; display: flex; align-items: center; gap: 12px; min-width: 0; height: 30px; border: 1px solid #c0bebb; border-radius: 4px; background: #fff; padding: 0 7px 0 8px; }
.urlbox svg + svg:nth-child(2) { margin-left: -8px; }
.urlbox .url { flex: 1; min-width: 0; color: #999; white-space: nowrap; overflow: hidden; margin-left: -3px; }
.url b { font-weight: 400; color: #222; }
.search { display: flex; align-items: center; gap: 6px; width: 199px; height: 30px; margin-left: 10px; padding: 0 8px; border: 1px solid #c0bebb; border-radius: 4px; background: #fff; }
.search input { flex: 1; min-width: 0; border: 0; padding: 0; background: none; font: inherit; }
.search input::placeholder { color: #999; }
.nav-tools { display: flex; gap: 16px; margin-left: 94px; padding-right: 12px; border-right: 1px solid #d5d3d0; height: 34px; }
.menu { margin-left: 11px; }
.bookmarks { display: flex; align-items: center; gap: 14px; height: 21px; flex: none; padding: 0 12px; background: linear-gradient(#ecebea, #c2c1bf); white-space: nowrap; }
.bookmarks a { display: flex; align-items: center; gap: 4px; color: #3c3b37; text-decoration: none; }
.bookmarks i { height: 14px; border-left: 1px solid #bbb; }
.bookmarks i + i { margin-left: -4px; }
.more { margin-left: auto; }
.page-strip { flex: 1; display: flex; align-items: flex-end; min-height: 0; background: #b9b8b7; font: 700 14px/20px "Liberation Sans", Arial, sans-serif; overflow: hidden; }
.side { display: flex; gap: 6px; width: 190px; height: 26px; padding-left: 9px; background: #064b73; color: #9bb9cb; border-right: 8px solid #18588c; }
.side-scroll { width: 16px; height: 26px; background: #b0b0b0; border-right: 5px solid #d8d8d8; }
.grid-head { width: 850px; background: #17375b; color: #9ba5b4; border-bottom: 2px solid #ccc; font-size: 12px; line-height: 24px; }
.grid-head th { padding: 0 0 0 5px; text-align: left; border-right: 1px solid #a6adb6; white-space: nowrap; }
.g30 { width: 30px; } .g32 { width: 32px; } .g33 { width: 33px; } .g48 { width: 48px; } .g51 { width: 51px; } .g54 { width: 54px; } .g55 { width: 55px; } .g62 { width: 62px; } .g170 { width: 170px; } .g216 { width: 216px; }
.page-rest { flex: 1; height: 26px; margin-left: 6px; border-left: 1px solid #888; background: linear-gradient(#777, #c4c3c2); display: flex; justify-content: flex-end; }
.page-rest span { width: 14px; border: 1px solid #999; border-radius: 0 0 7px 7px; background: #aaa; }
.hscroll { height: 14px; flex: none; margin-right: 14px; background: #c4c3c1; border-radius: 0 7px 7px 0; border: 1px solid #aaa; }
.hscroll span { display: block; height: 12px; margin-right: 17px; border-radius: 7px; background: #d6d5d3; border-right: 1px solid #999; border-left: 1px solid #999; }
.findbar { display: flex; align-items: center; gap: 17px; height: 38px; flex: none; padding: 0 12px 0 8px; border-top: 2px solid #bbb9b6; background: linear-gradient(#dddcda, #efeeed 60%); white-space: nowrap; }
.find-group { display: flex; height: 24px; border: 1px solid #bbb9b6; border-radius: 2px; margin-right: -6px; }
.find-group input { width: 203px; border: 0; padding: 0 6px; background: #fff; font: inherit; color: inherit; }
.find-group button { width: 27px; justify-content: center; border-left: 1px solid #bbb9b6; }
.findbar button u { text-underline-offset: 3px; }
.findbar > button { display: block; }
.found, .wrapped { color: #888; }
.wrapped { margin-left: -5px; }
.findbar > .find-close { margin-left: auto; }

/* Image viewer window, floating over the browser */
.viewer { position: absolute; z-index: 1; left: 65px; right: 0; top: 96px; bottom: 68px; display: flex; flex-direction: column; border-radius: 6px 6px 0 0; overflow: hidden; box-shadow: 0 6px 12px #0006; }
.titlebar { display: flex; align-items: center; gap: 3px; height: 29px; flex: none; padding-left: 7px; background: linear-gradient(#5e5c50, #3f3e39); color: #dfdbd2; border-bottom: 1px solid #34332f; }
.titlebar h1 { margin-left: 9px; font-size: 14px; line-height: 20px; }
.wb { border-radius: 50%; background: #807d76; border: 1px solid #34332f; width: 16px; height: 16px; justify-content: center; }
.wb.red { background: #f0653a; }
.toolbar { display: flex; align-items: center; height: 39px; flex: none; padding-left: 13px; background: linear-gradient(#3d3c38, #56544b); color: #dfdbd2; }
.nav { gap: 12px; margin-right: 21px; }
.toolbar i { height: 22px; border-left: 1px solid #37362f; margin: 0 3px 0 -10px; }
.toolbar i + .tool { margin-left: 4px; }
.toolbar .tool ~ i { margin: 0 2px 0 7px; }
.tool { width: 38px; height: 34px; justify-content: center; }
.toolbar .turn { width: 36px; }
.pressed { background: #33322e; border: 1px solid #292823; border-radius: 5px; }
.canvas { flex: 1; min-height: 0; padding: 7px 0; background: #000; display: flex; }
.shot { position: relative; flex: 1; min-width: 0; display: flex; flex-direction: column; background: #fff; }
.insecure { display: flex; align-items: center; gap: 8px; height: 24px; flex: none; padding-left: 8px; background: #f1f3f4; border-bottom: 1px solid #c4c6c8; color: #777; font: 13px/20px "Open Sans", sans-serif; }
.insecure i { height: 16px; border-left: 1px solid #999; }
.insecure b { font-weight: 400; color: #333; }
.insecure em { margin-left: auto; width: 5px; height: 12px; background: #5c5f63; }
.notes { position: absolute; inset: 0; width: 100%; height: 100%; font: 13px "Noto Sans", sans-serif; }
.status { display: flex; align-items: center; gap: 10px; height: 29px; flex: none; padding: 0 41px 0 10px; background: #f2f1f0; }
.status .count { margin-left: auto; }

/* Printed order */
.order { flex: 1; min-width: 0; display: flex; flex-direction: column; padding: 0 9px; background: #fff; color: #000; font: 13px/17px "Liberation Serif", "Times New Roman", serif; }
.order-head { display: grid; grid-template-columns: 239px 1fr 390px; font-family: "Liberation Sans", Arial, sans-serif; line-height: 15px; padding-bottom: 6px; }
.brand { padding: 30px 0 0 21px; }
.logo { width: 150px; height: 54px; margin-bottom: 19px; }
.logo-text { font: 700 33px "Open Sans", sans-serif; }
.contact { padding-top: 29px; }
.contact p + p { margin-top: 30px; }
.second { margin-left: 47px; }
.order-id { font-family: "Liberation Serif", "Times New Roman", serif; line-height: 17px; }
h2 { font-size: 24px; line-height: 33px; text-align: center; padding: 13px 0 4px; }
.order th { font-weight: 400; padding: 2px; }
.order td { padding: 2px; vertical-align: top; text-align: center; height: 23px; }
.order th, .order td { border: 1px solid; border-color: #4d4d4d #aeaeae #aeaeae #4d4d4d; white-space: nowrap; }
.order .date-table { border: 1px solid #777; border-width: 0 1px 1px 0; }
.order .date-table th, .order .date-table td { border-color: #4d4d4d #777 #777 #4d4d4d; }
.date-table .d1 { width: 43%; } .date-table .d2 { width: 35%; }
.frame { flex: 1; border: 1px solid; border-color: #777 #4d4d4d transparent #aeaeae; }
.parties { display: grid; grid-template-columns: 1fr 1fr; border-bottom: 1px solid #aeaeae; }
.parties > div { padding: 4px 3px 0; }
.parties > div + div { padding: 12px 3px 10px; border-left: 1px solid #4d4d4d; }
.parties > div > b { display: block; line-height: 18px; }
.attn { line-height: 18px; }
.attn span { margin-left: 13px; font-size: 14px; }
.t1 { width: 10%; } .t2 { width: 12%; } .t3 { width: 13%; } .t4 { width: 17%; } .t5 { width: 30%; }
.i1 { width: 23.6%; } .i2 { width: 36.2%; } .i3 { width: 5.5%; } .i4 { width: 7%; } .i5 { width: 13.9%; }
.spacer { height: 25px; border: 1px solid; border-color: #4d4d4d #aeaeae #aeaeae #4d4d4d; }
.items th, .order .items td { text-align: left; }
.items th:nth-child(4), .order .items td:nth-child(4) { text-align: center; }
.items th:nth-child(n+5), .order .items td:nth-child(n+5) { text-align: right; }
.order .items td { line-height: 20px; padding: 1px 2px; }

/* Same order as captured in the viewer's image */
.small { padding: 0 7px; line-height: 16px; }
.small .order-head { grid-template-columns: 231px 1fr 400px; padding-bottom: 14px; }
.small .brand { padding-left: 20px; }
.small .logo { width: 145px; height: 52px; margin-bottom: 18px; }
.small .contact { padding-top: 28px; }
.small .contact p + p { margin-top: 28px; }
.small .second { margin-left: 46px; }
.small .order-id { line-height: 16px; }
.small h2 { font-size: 23px; line-height: 26px; padding: 21px 0 3px; }
.small th, .small td { border-color: #111; }
.small .date-table th, .small .date-table td { border-color: #555; }
.small .date-table td { height: 20px; padding: 1px; }
.small .date-table .d1 { width: 41%; } .small .date-table .d2 { width: 36%; }
.small .frame { border: 1px solid #111; border-width: 2px 1px 0; }
.small .parties { border-bottom: 2px solid #111; line-height: 15px; }
.small .parties > div { padding: 4px 3px 0; }
.small .parties > div + div { padding: 7px 2px 3px; border-color: #111; }
.small .parties > div > b { line-height: 15px; }
.small .attn { line-height: 19px; }
.small .terms th, .small .items th { padding: 1px 2px; }
.small .terms td { height: 22px; }
.small .spacer { height: 24px; border: 0; border-top: 3px solid #000; }

/* Second screen */
.popup { flex: 1; min-width: 0; display: flex; flex-direction: column; }
.popup-bar { display: flex; align-items: center; gap: 11px; height: 37px; flex: none; padding: 0 11px 0 5px; background: #f2f1f0; border-bottom: 1px solid #c0bebb; box-shadow: inset 0 5px 4px -3px #777; }
.urlbox.flat { height: 29px; background: #f2f1f0; }
.popup-page { flex: 1; min-height: 0; display: flex; }
.vscroll { width: 14px; background: #e4e3e1; border-left: 1px solid #ccc; }
.vscroll span { display: block; height: 78%; border: 1px solid #bbb; border-radius: 7px; background: linear-gradient(to right, #fafafa, #e6e5e4); }
```
